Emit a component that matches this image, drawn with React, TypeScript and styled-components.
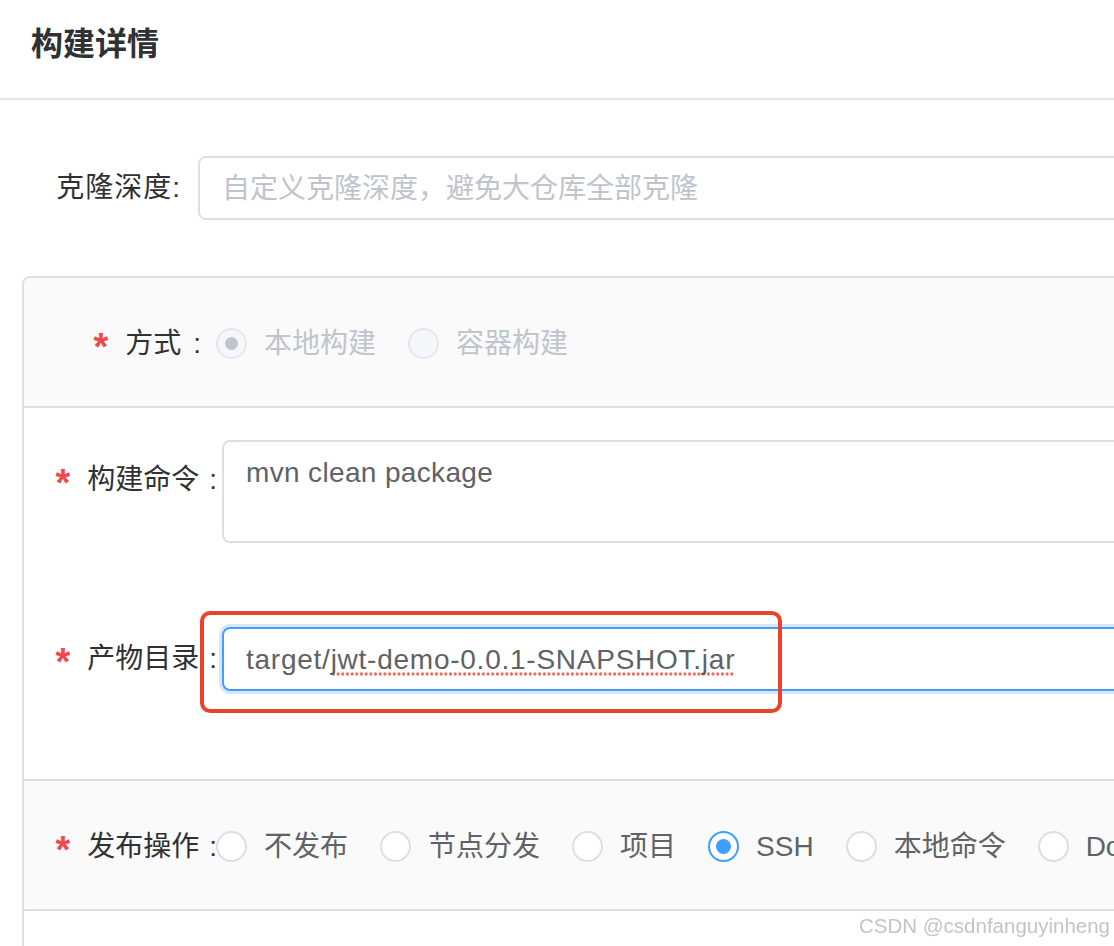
import React from "react";
import styled, { createGlobalStyle } from "styled-components";

const Global = createGlobalStyle`
  html, body {
    margin: 0;
    padding: 0;
    background: #ffffff;
    overflow: hidden;
  }
  body {
    font-family: "Liberation Sans", "Noto Sans CJK SC", sans-serif;
  }
  * { box-sizing: border-box; }
`;

const Page = styled.div`
  width: 1400px;
  min-height: 946px;
`;

const Header = styled.header`
  height: 100px;
  border-bottom: 2px solid #e6e6e6;
  display: flex;
  align-items: flex-start;
  padding: 28px 0 0 31px;
`;

const Title = styled.h1`
  margin: 0;
  font-size: 32px;
  line-height: 32px;
  font-weight: 700;
  color: #303133;
`;

const Body = styled.div`
  padding: 56px 0 0 22px;
  display: flex;
  flex-direction: column;
  gap: 56px;
`;

const Row = styled.div<{ $top?: boolean }>`
  display: flex;
  align-items: ${(p) => (p.$top ? "flex-start" : "center")};
`;

const FormLabel = styled.label<{
  $width: number;
  $gap: number;
  $lh?: number;
  $spacing?: number;
}>`
  flex-shrink: 0;
  width: ${(p) => p.$width}px;
  margin-right: ${(p) => p.$gap}px;
  text-align: right;
  font-size: 28px;
  line-height: ${(p) => p.$lh ?? 40}px;
  letter-spacing: ${(p) => p.$spacing ?? 0}px;
  color: #303133;
  white-space: nowrap;
`;

const Star = styled.span`
  display: inline-block;
  font-family: "Liberation Sans", sans-serif;
  font-size: 38px;
  font-weight: 700;
  line-height: 0;
  color: #ef4a4a;
  margin-right: 17px;
  transform: translateY(7px);
`;

const Colon = styled.span<{ $space?: number }>`
  margin-left: ${(p) => p.$space ?? 0}px;
`;

const TextInput = styled.input`
  flex: 1;
  height: 64px;
  border: 2px solid #dcdfe6;
  border-radius: 8px;
  padding: 2px 22px 0;
  font-family: inherit;
  font-size: 28px;
  color: #606266;
  background: #fff;
  outline: none;
  &::placeholder {
    color: #c0c4cc;
  }
`;

const TextArea = styled.textarea`
  flex: 1;
  height: 103px;
  border: 2px solid #dcdfe6;
  border-radius: 8px;
  padding: 10px 22px;
  font-family: inherit;
  font-size: 28px;
  line-height: 42px;
  letter-spacing: 0.35px;
  color: #606266;
  background: #fff;
  resize: none;
  outline: none;
`;

const FieldWrap = styled.div`
  position: relative;
  flex: 1;
`;

const FocusedField = styled.div`
  height: 64px;
  border: 2px solid #409eff;
  border-radius: 8px;
  box-shadow: 0 0 0 3px #d6e7fc;
  padding: 2px 22px 0;
  display: flex;
  align-items: center;
  font-size: 28px;
  letter-spacing: 0.75px;
  color: #606266;
  white-space: nowrap;
`;

const Misspelled = styled.span`
  background-image: radial-gradient(circle, #ef6b5e 1.4px, transparent 1.9px);
  background-size: 4.7px 4px;
  background-repeat: repeat-x;
  background-position: 0 100%;
`;

const Annotation = styled.div`
  position: absolute;
  left: -22px;
  top: -16px;
  width: 582px;
  height: 102px;
  border: 4px solid #e8432d;
  border-radius: 10px;
  pointer-events: none;
`;

const Panel = styled.div`
  border: 2px solid #dcdfe6;
  border-radius: 8px;
  overflow: hidden;
`;

const Section = styled.div<{ $shaded?: boolean; $last?: boolean }>`
  background: ${(p) => (p.$shaded ? "#fafafa" : "#ffffff")};
  border-bottom: ${(p) => (p.$last ? "none" : "2px solid #dcdfe6")};
`;

const BarSection = styled(Section)`
  height: 130px;
  padding-top: 3px;
  display: flex;
  align-items: center;
`;

const StackSection = styled(Section)`
  display: flex;
  flex-direction: column;
  gap: 84px;
  padding: 32px 0 88px;
`;

const TailSection = styled(Section)`
  height: 120px;
`;

const RadioGroup = styled.div`
  display: flex;
  align-items: center;
`;

const RadioItem = styled.span`
  display: inline-flex;
  align-items: center;
  margin-right: 32px;
`;

const RadioCircle = styled.span<{ $checked?: boolean; $disabled?: boolean }>`
  width: 31px;
  height: 31px;
  border-radius: 50%;
  border: 2px solid
    ${(p) => (p.$disabled ? "#e4e7ed" : p.$checked ? "#409eff" : "#dcdfe6")};
  background: ${(p) => (p.$disabled ? "#f5f7fa" : "#ffffff")};
  display: flex;
  align-items: center;
  justify-content: center;
`;

const RadioDot = styled.span<{ $disabled?: boolean }>`
  width: ${(p) => (p.$disabled ? 13 : 15)}px;
  height: ${(p) => (p.$disabled ? 13 : 15)}px;
  border-radius: 50%;
  background: ${(p) => (p.$disabled ? "#c0c4cc" : "#409eff")};
`;

const RadioText = styled.span<{ $disabled?: boolean }>`
  margin-left: 17px;
  font-size: 28px;
  line-height: 40px;
  color: ${(p) => (p.$disabled ? "#c0c4cc" : "#606266")};
  white-space: nowrap;
`;

const Watermark = styled.div`
  position: fixed;
  right: 4px;
  bottom: 10px;
  font-family: "Liberation Sans", sans-serif;
  font-size: 20.5px;
  line-height: 21px;
  color: #c4c4c4;
  text-shadow: 0 0 1px #ffffff;
  white-space: nowrap;
`;

type RadioProps = {
  label: string;
  checked?: boolean;
  disabled?: boolean;
};

const Radio = ({ label, checked, disabled }: RadioProps) => (
  <RadioItem>
    <RadioCircle $checked={checked} $disabled={disabled}>
      {checked && <RadioDot $disabled={disabled} />}
    </RadioCircle>
    <RadioText $disabled={disabled}>{label}</RadioText>
  </RadioItem>
);

const publishOptions = [
  { label: "不发布" },
  { label: "节点分发" },
  { label: "项目" },
  { label: "SSH", checked: true },
  { label: "本地命令" },
  { label: "Docker" },
];

export default function App() {
  return (
    <Page>
      <Global />
      <Header>
        <Title>构建详情</Title>
      </Header>
      <Body>
        <Row>
          <FormLabel $width={159} $gap={17} $spacing={1}>
            克隆深度<Colon>:</Colon>
          </FormLabel>
          <TextInput readOnly placeholder="自定义克隆深度，避免大仓库全部克隆" />
        </Row>

        <Panel>
          <BarSection $shaded>
            <FormLabel $width={177} $gap={15}>
              <Star>*</Star>方式<Colon $space={12}>:</Colon>
            </FormLabel>
            <RadioGroup>
              <Radio label="本地构建" checked disabled />
              <Radio label="容器构建" disabled />
            </RadioGroup>
          </BarSection>

          <StackSection>
            <Row $top>
              <FormLabel $width={193} $gap={5} $lh={80}>
                <Star>*</Star>构建命令<Colon $space={10}>:</Colon>
              </FormLabel>
              <TextArea readOnly defaultValue="mvn clean package" />
            </Row>
            <Row>
              <FormLabel $width={193} $gap={5}>
                <Star>*</Star>产物目录<Colon $space={10}>:</Colon>
              </FormLabel>
              <FieldWrap>
                <FocusedField>
                  target/<Misspelled>jwt-demo-0.0.1-SNAPSHOT.jar</Misspelled>
                </FocusedField>
                <Annotation />
              </FieldWrap>
            </Row>
          </StackSection>

          <BarSection $shaded>
            <FormLabel $width={193} $gap={-1}>
              <Star>*</Star>发布操作<Colon $space={10}>:</Colon>
            </FormLabel>
            <RadioGroup>
              {publishOptions.map((o) => (
                <Radio key={o.label} label={o.label} checked={o.checked} />
              ))}
            </RadioGroup>
          </BarSection>

          <TailSection $last />
        </Panel>
      </Body>
      <Watermark>CSDN @csdnfanguyinheng</Watermark>
    </Page>
  );
}
